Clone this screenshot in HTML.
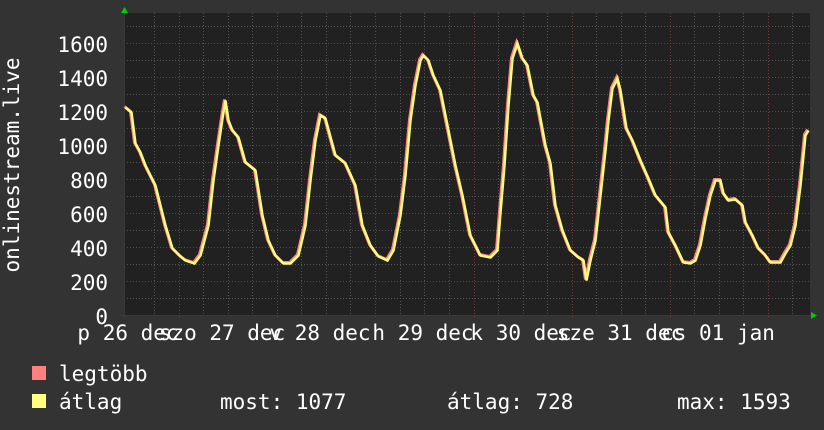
<!DOCTYPE html>
<html><head><meta charset="utf-8"><style>
html,body{margin:0;padding:0;background:#333333;}
svg{display:block;}
text{font-family:"DejaVu Sans Mono","Liberation Mono",monospace;fill:#ffffff;}
</style></head><body>
<svg width="824" height="430" viewBox="0 0 824 430" xmlns="http://www.w3.org/2000/svg">
<rect width="824" height="430" fill="#333333"/>
<rect x="124" y="13" width="686" height="302" fill="#212121"/>
<g stroke="#555" stroke-width="1" stroke-dasharray="1,2">
<line x1="124" x2="810" y1="298.5" y2="298.5"/><line x1="124" x2="810" y1="264.5" y2="264.5"/><line x1="124" x2="810" y1="230.5" y2="230.5"/><line x1="124" x2="810" y1="196.5" y2="196.5"/><line x1="124" x2="810" y1="162.5" y2="162.5"/><line x1="124" x2="810" y1="128.5" y2="128.5"/><line x1="124" x2="810" y1="94.5" y2="94.5"/><line x1="124" x2="810" y1="60.5" y2="60.5"/><line x1="124" x2="810" y1="26.5" y2="26.5"/>
<line y1="13" y2="315" x1="154.5" x2="154.5"/><line y1="13" y2="315" x1="203.5" x2="203.5"/><line y1="13" y2="315" x1="228.5" x2="228.5"/><line y1="13" y2="315" x1="252.5" x2="252.5"/><line y1="13" y2="315" x1="301.5" x2="301.5"/><line y1="13" y2="315" x1="326.5" x2="326.5"/><line y1="13" y2="315" x1="350.5" x2="350.5"/><line y1="13" y2="315" x1="400.5" x2="400.5"/><line y1="13" y2="315" x1="424.5" x2="424.5"/><line y1="13" y2="315" x1="449.5" x2="449.5"/><line y1="13" y2="315" x1="498.5" x2="498.5"/><line y1="13" y2="315" x1="523.5" x2="523.5"/><line y1="13" y2="315" x1="547.5" x2="547.5"/><line y1="13" y2="315" x1="596.5" x2="596.5"/><line y1="13" y2="315" x1="621.5" x2="621.5"/><line y1="13" y2="315" x1="645.5" x2="645.5"/><line y1="13" y2="315" x1="694.5" x2="694.5"/><line y1="13" y2="315" x1="719.5" x2="719.5"/><line y1="13" y2="315" x1="743.5" x2="743.5"/><line y1="13" y2="315" x1="792.5" x2="792.5"/>
</g>
<g stroke="#7a3a3a" stroke-width="1" stroke-dasharray="1,2">
<line x1="124" x2="810" y1="281.5" y2="281.5"/><line x1="124" x2="810" y1="247.5" y2="247.5"/><line x1="124" x2="810" y1="213.5" y2="213.5"/><line x1="124" x2="810" y1="179.5" y2="179.5"/><line x1="124" x2="810" y1="145.5" y2="145.5"/><line x1="124" x2="810" y1="111.5" y2="111.5"/><line x1="124" x2="810" y1="77.5" y2="77.5"/><line x1="124" x2="810" y1="43.5" y2="43.5"/>
<line y1="13" y2="318" x1="179.5" x2="179.5"/><line y1="13" y2="318" x1="277.5" x2="277.5"/><line y1="13" y2="318" x1="375.5" x2="375.5"/><line y1="13" y2="318" x1="474.5" x2="474.5"/><line y1="13" y2="318" x1="572.5" x2="572.5"/><line y1="13" y2="318" x1="670.5" x2="670.5"/><line y1="13" y2="318" x1="768.5" x2="768.5"/>
</g>
<line x1="124.5" y1="10" x2="124.5" y2="318" stroke="#3a3a3a"/>
<line x1="121" y1="315.5" x2="814" y2="315.5" stroke="#3a3a3a"/>
<polygon points="121,13 124.5,7 128,13" fill="#00cc00"/>
<polygon points="811,312 817,315.5 811,319" fill="#00cc00"/>
<g fill="none" stroke-linejoin="miter">
<polyline stroke="#ff7f7f" stroke-width="3" transform="translate(-0.5,-0.5)" points="125,107 131,112 135,143 140,152 145,165 155,185 160,205 165,225 172,248 180,256 185,260 194,263 200,255 208,225 213,180 218,145 222,118 225,100 228,120 232,130 238,137 245,162 255,170 262,215 268,240 275,255 283,263 290,263 298,255 305,225 310,180 315,140 320,115 325,118 335,155 345,163 355,185 362,225 370,245 378,256 387,260 393,250 400,215 405,175 410,120 415,85 420,60 423,55 428,60 433,75 440,90 448,130 455,165 462,195 470,235 480,255 490,257 497,250 500,212 504,165 508,105 512,58 517,43 522,58 527,65 533,95 537,102 545,145 550,163 555,205 562,230 570,250 578,257 583,260 586,280 590,260 595,240 600,195 605,150 608,120 612,88 617,78 620,90 626,128 632,140 640,160 648,178 655,195 665,207 668,232 675,245 683,262 690,263 695,260 700,245 705,218 710,195 715,180 720,180 723,193 728,200 735,199 742,205 745,222 752,235 758,248 765,255 770,262 780,262 785,253 790,245 795,225 800,185 805,135 808,130"/>
<polyline stroke="#ffff80" stroke-width="2.5" transform="translate(0.5,0.5)" points="125,107 131,112 135,143 140,152 145,165 155,185 160,205 165,225 172,248 180,256 185,260 194,263 200,255 208,225 213,180 218,145 222,118 225,100 228,120 232,130 238,137 245,162 255,170 262,215 268,240 275,255 283,263 290,263 298,255 305,225 310,180 315,140 320,115 325,118 335,155 345,163 355,185 362,225 370,245 378,256 387,260 393,250 400,215 405,175 410,120 415,85 420,60 423,55 428,60 433,75 440,90 448,130 455,165 462,195 470,235 480,255 490,257 497,250 500,212 504,165 508,105 512,58 517,43 522,58 527,65 533,95 537,102 545,145 550,163 555,205 562,230 570,250 578,257 583,260 586,280 590,260 595,240 600,195 605,150 608,120 612,88 617,78 620,90 626,128 632,140 640,160 648,178 655,195 665,207 668,232 675,245 683,262 690,263 695,260 700,245 705,218 710,195 715,180 720,180 723,193 728,200 735,199 742,205 745,222 752,235 758,248 765,255 770,262 780,262 785,253 790,245 795,225 800,185 805,135 808,130"/>
</g>
<g font-size="21" text-anchor="end">
<text x="108" y="52">1600</text><text x="108" y="86">1400</text><text x="108" y="120">1200</text><text x="108" y="154">1000</text><text x="108" y="188">800</text><text x="108" y="222">600</text><text x="108" y="256">400</text><text x="108" y="290">200</text><text x="108" y="324">0</text>
</g>
<text font-size="21" transform="translate(19,165) rotate(-90)" text-anchor="middle">onlinestream.live</text>
<g font-size="21" text-anchor="middle">
<text x="128" y="340">p 26 dec</text><text x="222" y="340">szo 27 dec</text><text x="320" y="340">v 28 dec</text><text x="423" y="340">h 29 dec</text><text x="521" y="340">k 30 dec</text><text x="620" y="340">sze 31 dec</text><text x="718" y="340">cs 01 jan</text>
</g>
<rect x="32" y="366" width="14" height="14" fill="#ff8080"/>
<rect x="32" y="394" width="14" height="14" fill="#ffff80"/>
<g font-size="21">
<text x="59" y="381">legtöbb</text><text x="59" y="409">átlag</text>
<text x="220" y="409">most: 1077</text><text x="447" y="409">átlag: 728</text><text x="677" y="409">max: 1593</text>
</g>
</svg>
</body></html>
